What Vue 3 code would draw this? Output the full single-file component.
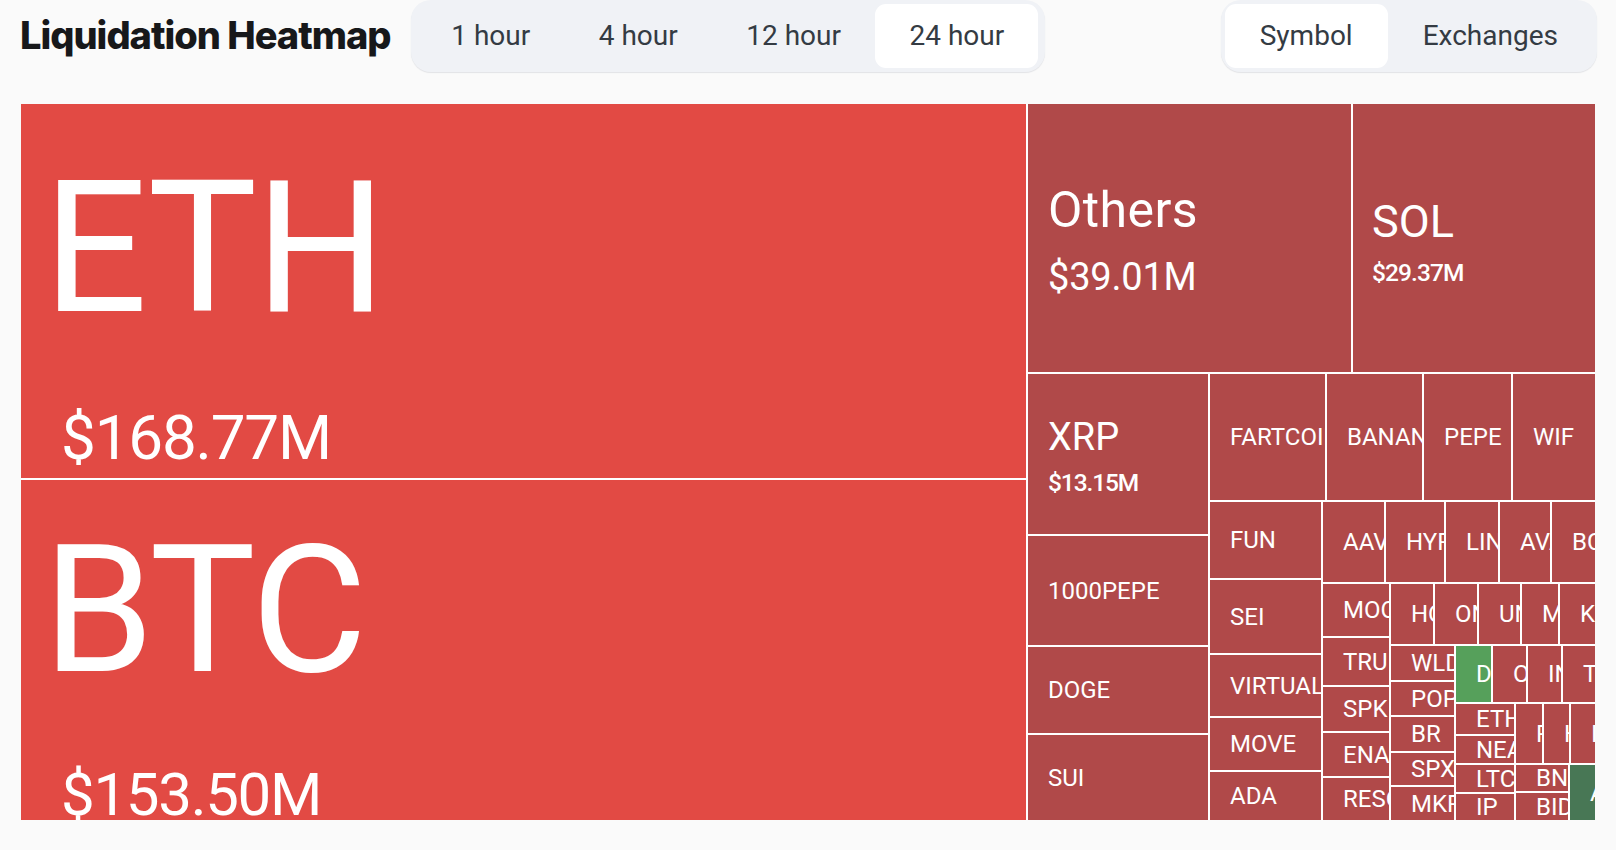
<script setup>
import { computed } from 'vue'

const ORIGIN = { x: 21, y: 104 }
const RED = '#e24a44'
const DIM = '#b04949'
const GREEN = '#56a05b'
const DEEP = '#487755'

const big = {
  ETH: { val: '$168.77M', size: 184, base: 311, vsize: 62, vbase: 459, left: 22, ls: -2, vls: -1.2, vleft: 40 },
  BTC: { val: '$153.50M', size: 178, base: 671, vsize: 60, vbase: 815, left: 22, ls: -2, vls: -1.3, vleft: 40 },
  Others: { val: '$39.01M', size: 50, base: 227, vsize: 38, vbase: 290, left: 20, ls: 0.4, vls: -0.2, vleft: 20 },
  SOL: { val: '$29.37M', size: 45, base: 237, vsize: 24.5, vbase: 282, left: 19, ls: 0, vls: -0.9, vleft: 19, vw: 500 },
  XRP: { val: '$13.15M', size: 38, base: 450, vsize: 24.5, vbase: 492, left: 20, ls: 0, vls: -1.1, vleft: 20, vw: 500 },
}

const rows = [
  ['ETH', 21, 104, 1026, 478, RED], ['BTC', 21, 480, 1026, 820, RED],
  ['Others', 1028, 104, 1351, 372], ['SOL', 1353, 104, 1595, 372],
  ['XRP', 1028, 374, 1208, 534], ['1000PEPE', 1028, 536, 1208, 645],
  ['DOGE', 1028, 647, 1208, 733], ['SUI', 1028, 735, 1208, 820],
  ['FARTCOIN', 1210, 374, 1325, 500], ['BANANA', 1327, 374, 1422, 500],
  ['PEPE', 1424, 374, 1511, 500], ['WIF', 1513, 374, 1595, 500],
  ['FUN', 1210, 502, 1321, 578], ['SEI', 1210, 580, 1321, 653],
  ['VIRTUAL', 1210, 655, 1321, 716], ['MOVE', 1210, 718, 1321, 770], ['ADA', 1210, 772, 1321, 820],
  ['AAVE', 1323, 502, 1384, 582], ['HYPE', 1386, 502, 1444, 582], ['LINK', 1446, 502, 1498, 582],
  ['AVAX', 1500, 502, 1550, 582], ['BCH', 1552, 502, 1595, 582],
  ['MOODENG', 1323, 584, 1389, 636], ['TRUMP', 1323, 638, 1389, 685], ['SPK', 1323, 687, 1389, 731],
  ['ENA', 1323, 733, 1389, 776], ['RESOLV', 1323, 778, 1389, 820],
  ['HOME', 1391, 584, 1433, 644], ['ONDO', 1435, 584, 1477, 644], ['UNI', 1479, 584, 1520, 644],
  ['MOG', 1522, 584, 1558, 644], ['KAITO', 1560, 584, 1595, 644],
  ['WLD', 1391, 646, 1454, 680], ['POPCAT', 1391, 682, 1454, 715], ['BR', 1391, 717, 1454, 751],
  ['SPX', 1391, 753, 1454, 785], ['MKR', 1391, 787, 1454, 820],
  ['DOT', 1456, 646, 1491, 702, GREEN], ['OP', 1493, 646, 1526, 702], ['INJ', 1528, 646, 1561, 702], ['TIA', 1563, 646, 1595, 702],
  ['ETHFI', 1456, 704, 1514, 734], ['NEAR', 1456, 736, 1514, 763], ['LTC', 1456, 765, 1514, 792], ['IP', 1456, 794, 1514, 820],
  ['PENGU', 1516, 704, 1542, 763], ['HBAR', 1544, 704, 1569, 763], ['ICP', 1571, 704, 1595, 763],
  ['BNB', 1516, 765, 1568, 791], ['BID', 1516, 793, 1568, 820], ['ARB', 1570, 765, 1595, 820, DEEP],
]

const ASC = 0.8415
const tiles = computed(() => rows.map(([name, x0, y0, x1, y1, color]) => {
  const tile = {
    name,
    box: { left: `${x0 - ORIGIN.x}px`, top: `${y0 - ORIGIN.y}px`, width: `${x1 - x0}px`, height: `${y1 - y0}px`, background: color || DIM },
  }
  const b = big[name]
  if (b) {
    const nameTop = b.base - ASC * b.size
    const valTop = b.vbase - ASC * b.vsize
    tile.big = true
    tile.val = b.val
    tile.nameStyle = { fontSize: `${b.size}px`, letterSpacing: `${b.ls}px`, marginTop: `${nameTop - y0}px`, marginLeft: `${b.left}px` }
    tile.valStyle = { fontSize: `${b.vsize}px`, letterSpacing: `${b.vls}px`, marginTop: `${valTop - nameTop - b.size}px`, marginLeft: `${b.vleft}px`, fontWeight: b.vw || 400 }
  }
  return tile
}))
</script>

<template>
  <div class="page">
    <header class="bar">
      <h1 class="title">Liquidation Heatmap</h1>
      <div class="group first">
        <button class="tab">1 hour</button>
        <button class="tab">4 hour</button>
        <button class="tab">12 hour</button>
        <button class="tab on">24 hour</button>
      </div>
      <div class="group end">
        <button class="tab on">Symbol</button>
        <button class="tab">Exchanges</button>
      </div>
    </header>
    <main class="map">
      <div v-for="t in tiles" :key="t.name" class="tile" :class="{ big: t.big }" :style="t.box">
        <template v-if="t.big">
          <div class="big-name" :style="t.nameStyle">{{ t.name }}</div>
          <div class="big-val" :style="t.valStyle">{{ t.val }}</div>
        </template>
        <span v-else class="small">{{ t.name }}</span>
      </div>
    </main>
  </div>
</template>

<style>
html, body { margin: 0; background: #fafafa; }
</style>

<style scoped>
.page {
  height: 850px;
  overflow: hidden;
  padding: 0 19px 0 21px;
  box-sizing: border-box;
  background: #fafafa;
  font-family: Roboto, "Noto Sans", sans-serif;
}
.bar {
  display: flex;
  align-items: flex-start;
  height: 73px;
  margin-bottom: 31px;
}
.title {
  margin: 14px 19px 0 -1px;
  width: 372px;
  font: 800 38px/42px Inter, sans-serif;
  letter-spacing: -1px;
  color: #17181a;
  white-space: nowrap;
}
.group {
  display: flex;
  height: 64px;
  padding: 4px;
  border-radius: 20px;
  background: #f0f2f6;
  box-shadow: 0 1px 1px #e2e3e6;
}
.first { padding: 4px 7px 4px 6px; }
.first .tab { padding: 0 34.25px; }
.end { margin-left: auto; }
.end .tab { padding: 0 35px; }
.tab {
  border: 0;
  border-radius: 11px;
  background: transparent;
  font: 400 28px/64px Roboto, sans-serif;
  color: #343b43;
}
.tab.on { background: #fff; }
.map {
  position: relative;
  height: 716px;
  width: 1574px;
  background: #fff;
}
.tile {
  position: absolute;
  overflow: hidden;
  color: #fff;
}
.tile:not(.big) {
  display: flex;
  align-items: center;
  padding-left: 20px;
  box-sizing: border-box;
}
.small {
  font-size: 24px;
  line-height: 28px;
  white-space: nowrap;
}
.big-name, .big-val {
  line-height: 1;
  white-space: nowrap;
}
</style>
